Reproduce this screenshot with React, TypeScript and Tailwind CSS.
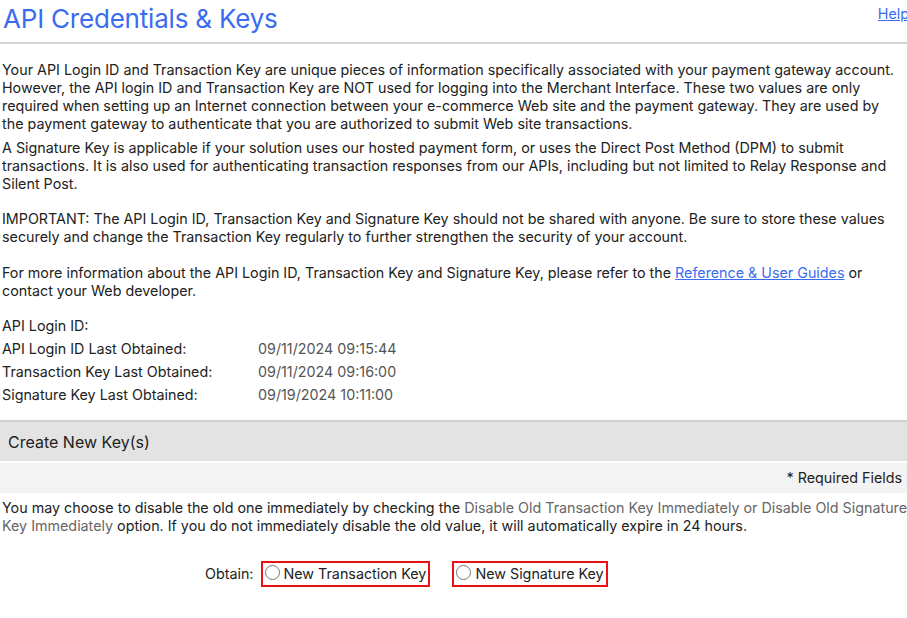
export default function App() {
    const dates = [
        { label: "API Login ID:", value: "" },
        { label: "API Login ID Last Obtained:", value: "09/11/2024 09:15:44" },
        { label: "Transaction Key Last Obtained:", value: "09/11/2024 09:16:00" },
        { label: "Signature Key Last Obtained:", value: "09/19/2024 10:11:00" },
    ];

    return (
        <div className="w-[907px] h-[618px] overflow-hidden bg-white font-['Inter',sans-serif] text-[#222]">
            <div className="w-[915px]">
                <div className="flex items-start justify-between h-[44px] border-b-2 border-[#d4d4d4]">
                    <h1 className="pl-[3px] pt-[3px] text-[26px] leading-[32px] text-[#3a6cf0] tracking-[-0.2px]">
                        API Credentials &amp; Keys
                    </h1>
                    <a href="#" className="pt-[3px] pr-[6px] text-[14.3px] text-[#3a6cf0] underline">
                        Help
                    </a>
                </div>

                <div className="w-[900px] px-[2px] pt-[17px] text-[14.3px] leading-[18px]">
                    <p>
                        Your API Login ID and Transaction Key are unique pieces of information specifically associated with your payment gateway account. However, the API login ID and Transaction Key are NOT used for logging into the Merchant Interface. These two values are only required when setting up an Internet connection between your e-commerce Web site and the payment gateway. They are used by the payment gateway to authenticate that you are authorized to submit Web site transactions.
                    </p>
                    <p className="mt-[6px]">
                        A Signature Key is applicable if your solution uses our hosted payment form, or uses the Direct Post Method (DPM) to submit transactions. It is also used for authenticating transaction responses from our APIs, including but not limited to Relay Response and Silent Post.
                    </p>
                    <p className="mt-[17px]">
                        IMPORTANT: The API Login ID, Transaction Key and Signature Key should not be shared with anyone. Be sure to store these values securely and change the Transaction Key regularly to further strengthen the security of your account.
                    </p>
                    <p className="mt-[18px]">
                        For more information about the API Login ID, Transaction Key and Signature Key, please refer to the{" "}
                        <a href="#" className="text-[#3a6cf0] underline">Reference &amp; User Guides</a> or contact your Web developer.
                    </p>

                    <div className="mt-[17px] flex flex-col gap-[5px]">
                        {dates.map((d) => (
                            <div key={d.label} className="flex">
                                <span className="w-[256px]">{d.label}</span>
                                <span className="text-[#555]">{d.value}</span>
                            </div>
                        ))}
                    </div>
                </div>

                <div className="mt-[16px] border-t-2 border-[#d0d0d0] bg-[#e3e3e3] h-[41px] flex items-center pl-[8px] text-[16px] text-[#222]">
                    Create New Key(s)
                </div>
                <div className="mt-[2px] bg-[#f3f3f3] h-[30px] flex items-center justify-end pr-[13px] text-[14.3px]">
                    * Required Fields
                </div>

                <p className="px-[2px] pt-[6px] text-[14.3px] leading-[18px]">
                    You may choose to disable the old one immediately by checking the{" "}
                    <span className="text-[#666]">Disable Old Transaction Key Immediately or Disable Old Signature Key Immediately</span>{" "}
                    option. If you do not immediately disable the old value, it will automatically expire in 24 hours.
                </p>

                <div className="mt-[26px] flex items-center pl-[205px] text-[14.3px]">
                    <span className="mr-[7px]">Obtain:</span>
                    <label className="flex items-center gap-[4px] border-2 border-[#ee1111] h-[26px] pl-[2px] pr-[2px]">
                        <span className="w-[15px] h-[15px] rounded-full border border-[#777] bg-white mb-[3px]" />
                        <span>New Transaction Key</span>
                    </label>
                    <label className="ml-[22px] flex items-center gap-[4px] border-2 border-[#ee1111] h-[26px] pl-[2px] pr-[2px]">
                        <span className="w-[15px] h-[15px] rounded-full border border-[#777] bg-white mb-[3px]" />
                        <span>New Signature Key</span>
                    </label>
                </div>
            </div>
        </div>
    );
}
